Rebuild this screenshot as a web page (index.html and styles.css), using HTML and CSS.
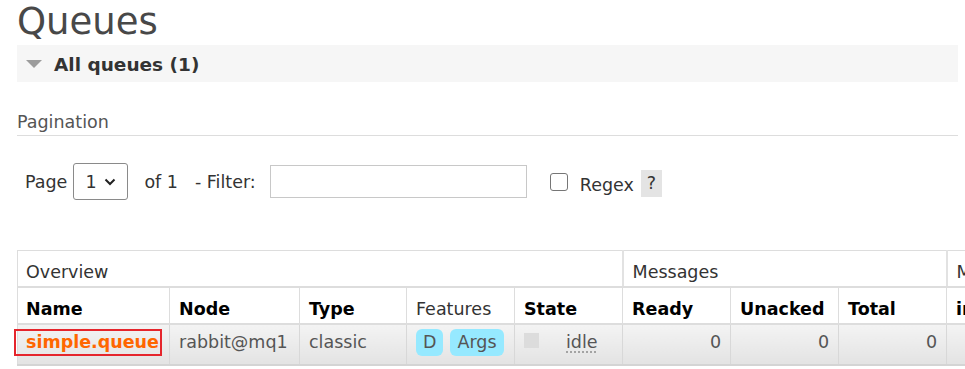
FILE: index.html
```html
<!DOCTYPE html>
<html lang="en">
<head>
    <meta charset="UTF-8">
    <meta name="viewport" content="width=device-width, initial-scale=1.0">
    <title>Queues</title>
    <link rel="stylesheet" href="styles.css">
</head>
<body>
    <h1 class="page-title">Queues</h1>

    <div class="section-bar">
        <span class="toggle"></span>
        <h2>All queues (1)</h2>
    </div>

    <div class="pagination">
        <h3>Pagination</h3>
        <div class="filter-row">
            <label for="page">Page</label>
            <span class="select-wrap">
                <select id="page"><option>1</option></select>
                <svg class="chevron" width="12" height="8" viewBox="0 0 12 8">
                    <path d="M1.5 1.5 L6 6 L10.5 1.5" fill="none" stroke="#222" stroke-width="2"/>
                </svg>
            </span>
            <span class="of">of 1</span>
            <label for="filter" class="filter-label">- Filter:</label>
            <input type="text" id="filter" class="filter-input">
            <input type="checkbox" id="regex" class="check">
            <label for="regex" class="regex-label">Regex</label>
            <span class="help">?</span>
        </div>
    </div>

    <div class="table-wrap">
        <table class="queues">
            <colgroup>
                <col style="width:152px">
                <col style="width:130px">
                <col style="width:107px">
                <col style="width:108px">
                <col style="width:108px">
                <col style="width:108px">
                <col style="width:108px">
                <col style="width:108px">
                <col style="width:120px">
                <col style="width:120px">
                <col style="width:120px">
            </colgroup>
            <thead>
                <tr class="group-row">
                    <th colspan="5">Overview</th>
                    <th colspan="3">Messages</th>
                    <th colspan="3">Message rates</th>
                </tr>
                <tr class="col-row">
                    <th>Name</th>
                    <th>Node</th>
                    <th>Type</th>
                    <th class="plain">Features</th>
                    <th>State</th>
                    <th>Ready</th>
                    <th>Unacked</th>
                    <th>Total</th>
                    <th>incoming</th>
                    <th>deliver / get</th>
                    <th>ack</th>
                </tr>
            </thead>
            <tbody>
                <tr>
                    <td><a href="#" class="queue-link">simple.queue</a></td>
                    <td>rabbit@mq1</td>
                    <td>classic</td>
                    <td class="features"><span class="badge">D</span><span class="badge">Args</span></td>
                    <td><span class="state-dot"></span><abbr class="state" title="idle">idle</abbr></td>
                    <td class="num">0</td>
                    <td class="num">0</td>
                    <td class="num">0</td>
                    <td class="num"></td>
                    <td class="num"></td>
                    <td class="num"></td>
                </tr>
            </tbody>
        </table>
    </div>
</body>
</html>
```

FILE: styles.css
```css
html, body {
    overflow: hidden;
}
body {
    margin: 0;
    padding: 0 7px 0 17px;
    font-family: "DejaVu Sans", Verdana, sans-serif;
    font-size: 17.5px;
    color: #333;
    background: #fff;
}
.page-title {
    margin: 0;
    padding-top: 2px;
    font-size: 37px;
    font-weight: normal;
    line-height: 40px;
    color: #484848;
}
.section-bar {
    display: flex;
    align-items: center;
    height: 37px;
    margin-top: 3px;
    padding-left: 9px;
    background: #f6f6f6;
}
.toggle {
    width: 0;
    height: 0;
    border-left: 8.5px solid transparent;
    border-right: 8.5px solid transparent;
    border-top: 8px solid #9c9c9c;
    margin-right: 12px;
}
.section-bar h2 {
    margin: 0;
    padding-top: 2px;
    font-size: 18.5px;
    font-weight: bold;
    color: #333;
}
.pagination h3 {
    margin: 28px 0 0;
    font-size: 17.5px;
    font-weight: normal;
    line-height: 25px;
    color: #555;
    border-bottom: 1px solid #ddd;
}
.filter-row {
    display: flex;
    align-items: center;
    height: 37px;
    margin-top: 27px;
    padding-left: 8px;
}
.select-wrap {
    position: relative;
    margin-left: 6px;
}
.select-wrap select {
    appearance: none;
    -webkit-appearance: none;
    width: 55px;
    height: 37px;
    padding: 0 0 0 11px;
    border: 1px solid #8a8a8a;
    border-radius: 3px;
    background: #fff;
    font-family: inherit;
    font-size: 17.5px;
    color: #333;
}
.chevron {
    position: absolute;
    left: 31px;
    top: 15px;
    pointer-events: none;
}
.of {
    margin-left: 16px;
}
.filter-label {
    margin-left: 17px;
}
.filter-input {
    width: 257px;
    height: 33px;
    box-sizing: border-box;
    margin: 0 0 0 14px;
    border: 1px solid #c8c8c8;
    font-family: inherit;
    font-size: 17.5px;
}
.check {
    appearance: none;
    -webkit-appearance: none;
    width: 18px;
    height: 18px;
    margin: 0 0 0 23px;
    border: 1.5px solid #767676;
    border-radius: 3px;
    background: #fff;
}
.regex-label {
    margin-left: 12px;
    margin-top: 6px;
}
.help {
    margin: 3px 0 0 7px;
    width: 21px;
    height: 27px;
    line-height: 27px;
    text-align: center;
    background: #e4e4e4;
    color: #333;
}
.table-wrap {
    margin-top: 50px;
}
.queues {
    table-layout: fixed;
    width: 1289px;
    border-collapse: collapse;
    border: 1px solid #ddd;
}
.queues th {
    padding: 11px 9px 4px;
    line-height: 20px;
    text-align: left;
    white-space: nowrap;
    overflow: hidden;
}
.group-row th {
    font-weight: normal;
    color: #333;
    border-left: 2px solid #e2e2e2;
    border-bottom: 2px solid #ddd;
}
.col-row th {
    font-weight: bold;
    color: #000;
    border-left: 1px solid #ddd;
    border-bottom: 2px solid #ddd;
}
.queues tr > :first-child {
    border-left: 1px solid #ddd;
    padding-left: 8px;
}
.col-row th.plain {
    font-weight: normal;
    color: #333;
}
.queues td {
    padding: 4px 9px 8px;
    line-height: 27px;
    vertical-align: top;
    white-space: nowrap;
    color: #555;
    border-left: 1px solid #d8d8d8;
    border-bottom: 2px solid #d4d4d4;
    background: linear-gradient(#f3f3f3, #e3e3e3);
}
.queue-link {
    display: inline-block;
    margin: 0 -5px 0 -12px;
    padding: 0 1px 0 10px;
    line-height: 23px;
    border: 2px solid #e5252c;
    color: #ff6600;
    font-weight: bold;
    text-decoration: none;
}
.features {
    padding-left: 11px;
}
.badge {
    display: inline-block;
    padding: 0 7px;
    margin-right: 7px;
    border-radius: 6px;
    background: #96e9ff;
    color: #555;
}
.state-dot {
    display: inline-block;
    width: 15px;
    height: 15px;
    margin-top: 4px;
    vertical-align: top;
    background: #dcdcdc;
}
.state {
    margin-left: 27px;
    text-decoration: underline dotted #999;
    text-underline-offset: 4px;
}
.num {
    text-align: right;
}
```
